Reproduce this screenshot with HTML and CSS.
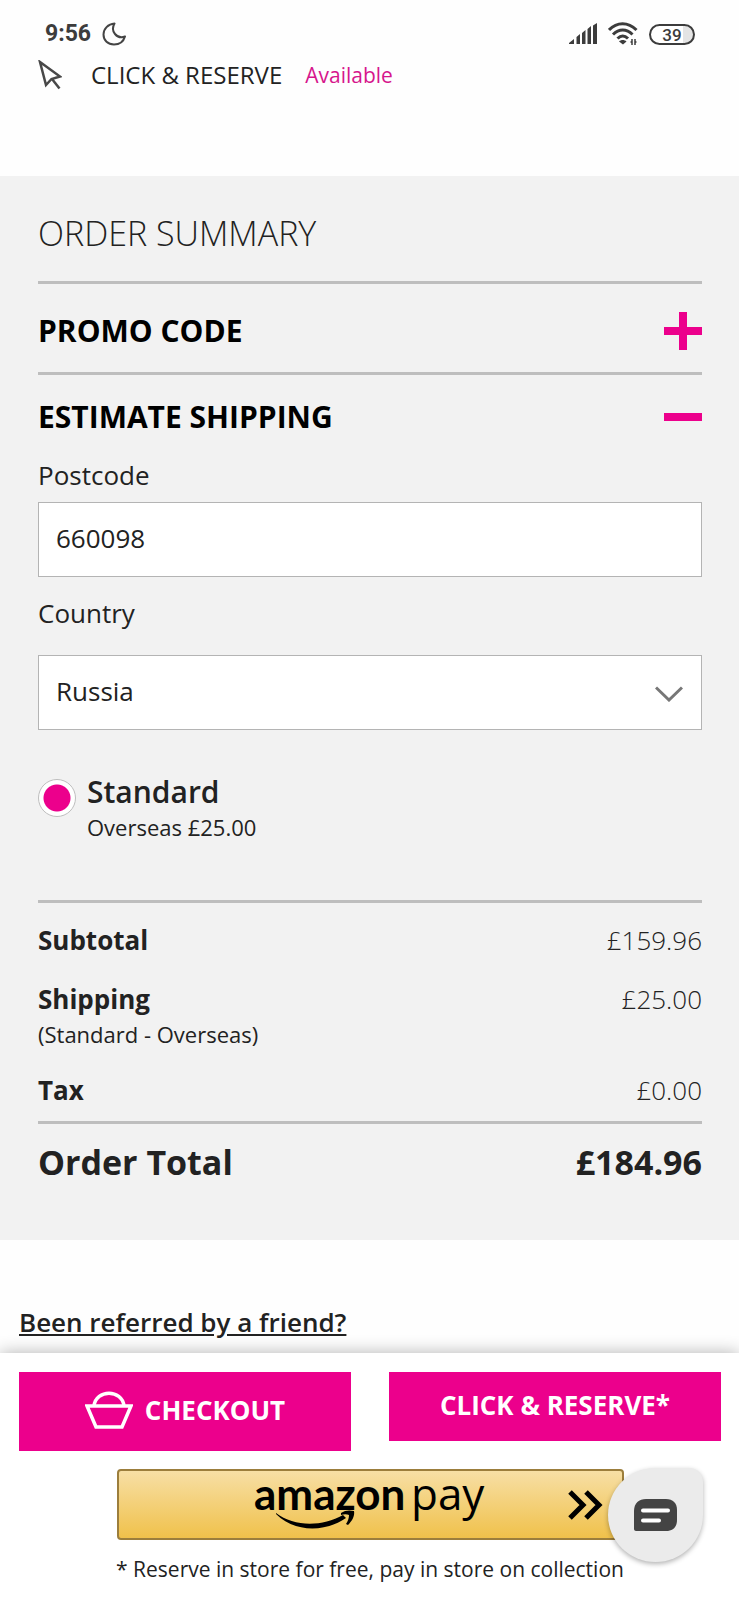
FILE: index.html
```
<!DOCTYPE html>
<html lang="en">
<head>
    <meta charset="utf-8">
    <meta name="viewport" content="width=device-width, initial-scale=1">
    <title>Basket - Order Summary</title>
    <link rel="stylesheet" href="styles.css">
</head>
<body>
    <div class="status-bar">
        <span class="time">9:56</span>
        <svg class="moon" width="24" height="24" viewBox="0 0 24 24" fill="none" stroke="#444" stroke-width="2" stroke-linejoin="round">
            <path d="M12.500 1.500C6 2 1.500 7 1.500 12.500 1.500 18.500 6 22.500 12 22.500c5.500 0 9.500-3 11-8-3.500 1.500-7.500.5-10-2.500-2.500-3-2.500-7-.5-10.500z"/>
        </svg>
        <div class="status-icons">
            <svg width="28" height="22" viewBox="0 0 28 22" fill="#3c3c3c">
                <path d="M0 20l5-4v5H0zM7.500 14l3.500-3v10H7.500zM13 10l3.500-3v14H13zM18.500 6L22 3v18h-3.500zM24 2.500L28 0v21h-4z"/>
            </svg>
            <svg width="30" height="24" viewBox="0 0 30 24" fill="none" stroke="#3c3c3c" stroke-width="3">
                <path d="M1 8C9-.5 20-.5 28.500 8M5 12.500c6-6 13.500-6 19.500 0M9.500 16.500c3.500-3.500 7-3.500 10.500 0"/>
                <path d="M11 19.500c2-2 5.500-2 7.500 0l-3.500 3z" fill="#3c3c3c" stroke="none"/>
                <path d="M24 17v6m-1.500-3H24M27 17v6m1.500-3H27" stroke-width="1.500"/>
            </svg>
            <span class="battery">39</span>
        </div>
    </div>

    <div class="reserve-row">
        <svg width="24" height="30" viewBox="0 0 24 30" fill="none" stroke="#484848" stroke-width="2.500">
            <path d="M2 2l20 14.500-8.500 2.500L8 25z"/>
            <path d="M14 19l7.500 9.500"/>
        </svg>
        <span class="reserve-name">CLICK &amp; RESERVE</span>
        <span class="available">Available</span>
    </div>

    <section class="summary">
        <h1>ORDER SUMMARY</h1>
        <button type="button" class="toggle promo">PROMO CODE <span class="icon plus"></span></button>
        <button type="button" class="toggle estimate">ESTIMATE SHIPPING <span class="icon"></span></button>

        <label class="postcode-label" for="postcode">Postcode</label>
        <input type="text" class="field" id="postcode" value="660098">
        <label class="country-label" for="country">Country</label>
        <div class="select-box">
            <select class="field" id="country">
                <option>Russia</option>
            </select>
            <svg class="chevron" width="28" height="16" viewBox="0 0 28 16" fill="none" stroke="#777" stroke-width="3">
                <path d="M1 1.500l13 12.500L27 1.500"/>
            </svg>
        </div>

        <div class="method">
            <input type="radio" name="method" id="standard" checked>
            <label for="standard">
                <span class="method-name">Standard</span>
                <span class="small">Overseas £25.00</span>
            </label>
        </div>

        <table class="totals">
            <tr>
                <th>Subtotal</th>
                <td>£159.96</td>
            </tr>
            <tr>
                <th>Shipping <span class="small">(Standard - Overseas)</span></th>
                <td>£25.00</td>
            </tr>
            <tr class="tax">
                <th>Tax</th>
                <td>£0.00</td>
            </tr>
            <tr class="order-total">
                <th>Order Total</th>
                <td>£184.96</td>
            </tr>
        </table>
    </section>

    <div class="referred">
        <a href="#">Been referred by a friend?</a>
    </div>

    <div class="pay-bar">
        <div class="buttons">
            <button type="button" class="btn checkout">
                <svg width="48" height="38" viewBox="0 0 48 38" fill="none" stroke="#fff" stroke-width="3.500">
                    <path d="M2 15h44l-9 21H11z"/>
                    <path d="M9 15C11-2 37-2 39 15"/>
                </svg>
                CHECKOUT
            </button>
            <button type="button" class="btn">CLICK &amp; RESERVE*</button>
        </div>
        <button type="button" class="amazon" aria-label="amazon pay">
            <svg class="amazon-logo" width="232" height="67" viewBox="0 0 232 67">
                <text class="logo-amazon" x="0" y="39">amazon</text>
                <text class="logo-pay" x="157" y="39">pay</text>
                <path d="M22 42c18 14 46 14 67 2l3 3c-22 15-52 14-70-4z"/>
                <path d="M87 42c4-3 9-3 13-2 1 5-2 10-6 14l-2-1c2-3 3-6 3-9-2-1-5-1-8 0z"/>
            </svg>
            <svg class="arrows" width="36" height="30" viewBox="0 0 36 30" fill="none" stroke="#000" stroke-width="5">
                <path d="M2 2l13 13L2 28M18 2l13 13-13 13"/>
            </svg>
        </button>
        <p class="note">* Reserve in store for free, pay in store on collection</p>
        <button type="button" class="chat" aria-label="Chat">
            <svg width="43" height="32" viewBox="0 0 43 32">
                <path d="M12 0h20c7 0 11 4 11 11v10c0 7-4 11-11 11H2c-1 0-2-1-2-2V12C0 4 5 0 12 0z" fill="#444"/>
                <path d="M9 11.500h25M9 21.500h16" stroke="#fff" stroke-width="4" stroke-linecap="round"/>
            </svg>
        </button>
    </div>
</body>
</html>
```
FILE: styles.css
```
* {
    box-sizing: border-box;
}
body {
    margin: 0;
    background-color: #fefefe;
    color: #222;
    font-family: "Open Sans", "Noto Sans", sans-serif;
    font-size: 26px;
    line-height: 36px;
}
button, input, select {
    font: inherit;
    color: inherit;
}
.status-bar {
    display: flex;
    align-items: center;
    padding: 16px 44px 0 45px;
    color: #3c3c3c;
    font-family: Roboto, sans-serif;
}
.time {
    font-size: 23px;
    font-weight: 700;
}
.moon {
    margin-left: 11px;
}
.status-icons {
    display: flex;
    align-items: center;
    gap: 11px;
    margin-left: auto;
}
.battery {
    width: 46px;
    height: 21px;
    border: 2px solid #3c3c3c;
    border-radius: 11px;
    background: linear-gradient(to right, #fff 75%, #e4e4e4 75%);
    font-size: 17px;
    font-weight: 500;
    line-height: 18px;
    text-align: center;
}
.reserve-row {
    display: flex;
    align-items: center;
    padding: 5px 38px 83px;
}
.reserve-name {
    margin-left: 29px;
    font-size: 24px;
}
.available {
    margin-left: 23px;
    color: #d6168c;
    font-size: 21px;
}
.summary {
    padding: 33px 37px 54px 38px;
    background-color: #f2f2f2;
}
h1 {
    margin: 0;
    padding-bottom: 24px;
    border-bottom: 3px solid #bebebe;
    font-size: 34px;
    font-weight: 300;
    line-height: 48px;
}
.toggle {
    display: flex;
    justify-content: space-between;
    align-items: center;
    width: 100%;
    border: none;
    background: none;
    color: #000;
    font-size: 30px;
    font-weight: 700;
    line-height: 40px;
    cursor: pointer;
}
.promo {
    padding: 27px 0 21px;
    border-bottom: 3px solid #bebebe;
}
.estimate {
    padding: 22px 0 20px;
}
.icon {
    width: 38px;
    height: 38px;
    background: linear-gradient(#ec008c, #ec008c) center / 38px 8px no-repeat;
}
.plus {
    background: linear-gradient(#ec008c, #ec008c) center / 38px 8px no-repeat,
                linear-gradient(#ec008c, #ec008c) center / 8px 38px no-repeat;
}
.postcode-label, .country-label {
    display: block;
}
.postcode-label {
    margin-bottom: 9px;
}
.country-label {
    margin: 18px 0 24px;
}
.field {
    display: block;
    width: 100%;
    height: 75px;
    padding: 0 17px 3px;
    border: 1px solid #b4b4b4;
    border-radius: 0;
    background-color: #fff;
    appearance: none;
}
.select-box {
    position: relative;
}
.chevron {
    position: absolute;
    right: 19px;
    top: 31px;
    pointer-events: none;
}
.method {
    display: flex;
    align-items: flex-start;
    gap: 11px;
    padding: 44px 0 56px;
}
.method input {
    width: 38px;
    height: 38px;
    margin: 5px 0 0;
    border: 1px solid #bebebe;
    border-radius: 50%;
    background-color: #fff;
    appearance: none;
}
.method input:checked {
    background-image: radial-gradient(circle, #ec008c 13px, #fff 14px);
}
.method-name {
    display: block;
    font-size: 30px;
    font-weight: 600;
    line-height: 36px;
}
.small {
    display: block;
    font-size: 22px;
    font-weight: 400;
    line-height: 34px;
}
.totals {
    width: 100%;
    border-top: 3px solid #bebebe;
    border-collapse: collapse;
}
.totals th, .totals td {
    padding: 19px 0 4px;
    vertical-align: top;
    text-align: left;
}
.totals td {
    font-weight: 300;
    text-align: right;
}
.totals .tax th, .totals .tax td {
    padding: 17px 0 13px;
}
.totals .order-total th, .totals .order-total td {
    padding: 14px 0 0;
    border-top: 3px solid #bebebe;
    font-size: 34px;
    font-weight: 700;
    line-height: 48px;
}
.referred {
    padding: 64px 19px 13px;
    font-weight: 600;
}
.referred a {
    color: inherit;
}
.pay-bar {
    position: sticky;
    bottom: 0;
    padding: 19px 18px 13px 19px;
    background-color: #fff;
    box-shadow: 0 0 16px rgba(0, 0, 0, 0.3);
    text-align: center;
}
.buttons {
    display: grid;
    grid-template-columns: 1fr 1fr;
    gap: 38px;
    align-items: start;
}
.btn {
    display: flex;
    justify-content: center;
    align-items: center;
    gap: 12px;
    height: 69px;
    padding: 0 0 3px;
    border: none;
    background-color: #ec008c;
    color: #fff;
    font-weight: 700;
    cursor: pointer;
}
.checkout {
    height: 79px;
}
.amazon {
    display: grid;
    grid-template-columns: 1fr auto 1fr;
    align-items: center;
    width: 100%;
    max-width: 507px;
    height: 71px;
    margin: 18px auto 11px;
    padding: 0 18px;
    border: 2px solid #9c7e3c;
    border-radius: 4px;
    background: linear-gradient(#f7dfa5, #f0c14b);
    cursor: pointer;
}
.amazon-logo {
    grid-column: 2;
    overflow: visible;
}
.logo-amazon {
    font-family: Lato, sans-serif;
    font-size: 44px;
    font-weight: 700;
}
.logo-pay {
    font-family: "Open Sans", sans-serif;
    font-size: 44px;
}
.arrows {
    justify-self: end;
}
.note {
    margin: 0;
    font-size: 21px;
}
.chat {
    position: absolute;
    top: 115px;
    right: 36px;
    display: flex;
    justify-content: center;
    align-items: center;
    width: 95px;
    height: 94px;
    padding: 0;
    border: none;
    border-radius: 50% 14px 50% 50%;
    background-color: #ebebeb;
    box-shadow: 0 2px 5px rgba(0, 0, 0, 0.3);
    cursor: pointer;
}
```
